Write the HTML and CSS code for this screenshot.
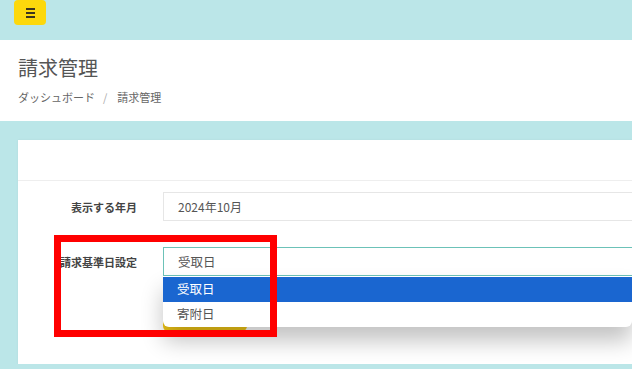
FILE: index.html
```html
<!DOCTYPE html>
<html lang="ja">
<head>
  <meta charset="UTF-8">
  <meta name="viewport" content="width=device-width, initial-scale=1.0">
  <title>請求管理</title>
  <link rel="stylesheet" href="styles.css">
</head>
<body>
  <div class="topbar">
    <button class="menu-btn" type="button" aria-label="menu">
      <span></span><span></span><span></span>
    </button>
  </div>

  <div class="page-header">
    <h1>請求管理</h1>
    <div class="breadcrumb">ダッシュボード<span class="sep">/</span>請求管理</div>
  </div>

  <div class="content">
    <div class="card">
      <div class="card-header"></div>
      <div class="card-body">
        <div class="form-row">
          <label class="form-label">表示する年月</label>
          <div class="form-field">
            <div class="input">2024年10月</div>
          </div>
        </div>
        <div class="form-row">
          <label class="form-label">請求基準日設定</label>
          <div class="form-field">
            <div class="input select">受取日</div>
            <div class="submit-btn"></div>
            <!-- open dropdown -->
            <ul class="dropdown">
              <li class="selected">受取日</li>
              <li>寄附日</li>
            </ul>
          </div>
        </div>
      </div>
      <div class="highlight"></div>
    </div>
  </div>
</body>
</html>
```

FILE: styles.css
```css
body {
  margin: 0;
  font-family: "Noto Sans CJK JP", "Open Sans", sans-serif;
  background-color: #bbe6e8;
  overflow: hidden;
  color: #555;
}

.topbar {
  height: 40px;
  padding-left: 14px;
  background-color: #bbe6e8;
}

.menu-btn {
  display: flex;
  flex-direction: column;
  align-items: center;
  justify-content: center;
  gap: 2px;
  width: 32px;
  height: 25px;
  padding: 0;
  border: none;
  border-radius: 4px;
  background-color: #fcd80c;
}

.menu-btn span {
  display: block;
  width: 9px;
  height: 2px;
  background-color: #3b3520;
}

.page-header {
  height: 81px;
  padding: 0 18px;
  background-color: #fff;
  box-sizing: border-box;
}

.page-header h1 {
  margin: 0;
  padding-top: 14px;
  font-size: 20px;
  font-weight: 400;
  line-height: 28px;
  color: #555;
}

.breadcrumb {
  margin-top: 7px;
  font-size: 11px;
  line-height: 16px;
  color: #666;
}

.breadcrumb .sep {
  margin: 0 10px 0 8px;
  color: #aaa;
}

.content {
  padding: 19px 0 0 18px;
}

.card {
  position: relative;
  height: 224px;
  background-color: #fff;
  box-shadow: 0 0 2px rgba(0, 0, 0, 0.06);
}

.card-header {
  height: 40px;
  border-bottom: 1px solid #eeeeee;
}

.card-body {
  padding-top: 11px;
}

.form-row {
  display: flex;
  margin-bottom: 26px;
}

.form-label {
  width: 119px;
  padding-top: 7px;
  text-align: right;
  font-size: 11px;
  font-weight: 700;
  line-height: 16px;
  color: #444;
}

.form-field {
  position: relative;
  flex: 1;
  margin-left: 26px;
}

.input {
  height: 29px;
  padding-left: 14px;
  border: 1px solid #e6e6e6;
  border-right: none;
  box-sizing: border-box;
  font-size: 12px;
  line-height: 27px;
  color: #555;
}

.select {
  border-color: #6cc2b8;
  font-size: 12.5px;
}

.submit-btn {
  width: 84px;
  height: 30px;
  margin-top: 26px;
  border-radius: 6px;
  background-color: #f2c716;
}

.dropdown {
  position: absolute;
  top: 29px;
  left: 0;
  right: 0;
  margin: 0;
  padding: 1px 0 0;
  list-style: none;
  background-color: #fff;
  border-radius: 0 0 6px 6px;
  box-shadow: 0 14px 22px rgba(0, 0, 0, 0.24);
}

.dropdown li {
  height: 25px;
  padding-left: 14px;
  font-size: 12.5px;
  line-height: 24px;
  color: #555;
}

.dropdown li.selected {
  background-color: #1a66d0;
  color: #fff;
}

/* red annotation box */
.highlight {
  position: absolute;
  left: 36px;
  top: 95px;
  width: 223px;
  height: 102px;
  border: 7px solid #f00;
  box-sizing: border-box;
}
```
